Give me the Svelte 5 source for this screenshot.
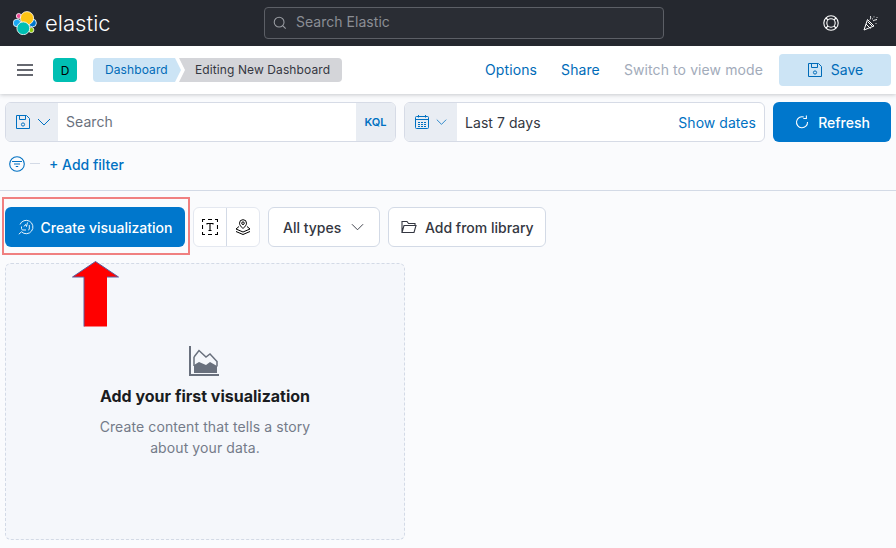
<script>
	const crumbs = ['Dashboard', 'Editing New Dashboard'];
</script>

{#snippet saveIcon()}
	<svg width="16" height="16" viewBox="0 0 16 16" fill="none" stroke="currentColor">
		<path d="M1.500 1.500h10l3 3v10h-13z M4.500 1.500v4h6v-4" />
		<circle cx="8" cy="10.500" r="1.600" />
	</svg>
{/snippet}

{#snippet chevron(w)}
	<svg width={w} height="10" viewBox="0 0 14 10" fill="none" stroke="currentColor">
		<path d="M1 2l6 6 6-6" />
	</svg>
{/snippet}

<div class="page">
	<header class="topbar">
		<div class="brand">
			<svg width="24" height="24" viewBox="0 0 24 24" stroke="#fff" stroke-width="0.8">
				<circle cx="5.800" cy="5" r="2.500" fill="#f04e98" />
				<circle cx="4" cy="12" r="3.800" fill="#1ba9f5" />
				<circle cx="19.500" cy="12" r="3.900" fill="#0077cc" />
				<circle cx="14" cy="7.200" r="6.600" fill="#fec514" />
				<circle cx="18.300" cy="19" r="2.600" fill="#93c90e" />
				<circle cx="10.300" cy="17.300" r="6.400" fill="#00bfb3" />
			</svg>
			<span class="wordmark">elastic</span>
		</div>
		<div class="global-search">
			<svg width="14" height="14" viewBox="0 0 16 16" fill="none" stroke="#9a9da3" stroke-width="1.200">
				<circle cx="7" cy="7" r="5.600" />
				<path d="M11 11l3.500 3.500" />
			</svg>
			<span>Search Elastic</span>
		</div>
		<div class="top-icons">
			<svg width="16" height="16" viewBox="0 0 16 16" fill="none" stroke="#fff" stroke-width="1.100">
				<circle cx="8" cy="8" r="7.200" />
				<circle cx="8" cy="8" r="4.200" />
				<path d="M3 3l2 2M13 3l-2 2M3 13l2-2M13 13l-2-2" />
			</svg>
			<svg width="16" height="16" viewBox="0 0 16 16" fill="none" stroke="#fff" stroke-width="1">
				<path d="M1 15L4.500 4.500 11 11z M3 9l4.500 4.500M4.500 6.500l5 5" />
				<path d="M7 4.500C8 3.500 7.500 2 7.500 1M10 6c1-1 2.500-1 4-1.500M11 1.500v.8M14 2v.8M13 8v.8M9.500 3.500v.8" />
			</svg>
		</div>
	</header>

	<nav class="appbar">
		<svg class="burger" width="16" height="12" viewBox="0 0 16 12">
			<path d="M0 1h16M0 6h16M0 11h16" stroke="#343741" stroke-width="1.600" />
		</svg>
		<div class="avatar">D</div>
		<div class="crumbs">
			<span class="crumb first">{crumbs[0]}</span>
			<span class="crumb last">{crumbs[1]}</span>
		</div>
		<div class="links">
			<span class="link">Options</span>
			<span class="link">Share</span>
			<span class="link muted">Switch to view mode</span>
			<button class="save">
				{@render saveIcon()}
				<span>Save</span>
			</button>
		</div>
	</nav>

	<section class="query">
		<div class="query-row">
			<div class="field search-field">
				<div class="prepend wide">
					{@render saveIcon()}
					{@render chevron(14)}
				</div>
				<span class="placeholder">Search</span>
				<div class="kql">KQL</div>
			</div>
			<div class="field date-field">
				<div class="prepend wide">
					<svg width="16" height="16" viewBox="0 0 16 16" fill="none" stroke="currentColor">
						<rect x="1.500" y="2.500" width="13" height="12" rx="1" />
						<path d="M1.500 5.500h13M4.500 1v2.500M11.500 1v2.500" />
						<path d="M4 8.500h8M4 10.500h8M4 12.500h8" stroke-dasharray="2 1" />
					</svg>
					{@render chevron(11)}
				</div>
				<span class="range">Last 7 days</span>
				<span class="show-dates">Show dates</span>
			</div>
			<button class="refresh">
				<svg width="14" height="14" viewBox="0 0 16 16" fill="none" stroke="#fff" stroke-width="1.200">
					<path d="M10 2.400A6.300 6.300 0 1 0 14.300 8M13 .5v3.500h-3.500" />
				</svg>
				Refresh
			</button>
		</div>
		<div class="filter-row">
			<svg width="16" height="16" viewBox="0 0 16 16" fill="none" stroke="#0071c2" stroke-width="1.100">
				<circle cx="8" cy="8" r="7.300" />
				<path d="M3 5.500h10M5 8h6M6.800 10.500h2.400" />
			</svg>
			<span class="dash"></span>
			<span class="add-filter">+ Add filter</span>
		</div>
	</section>

	<main class="content">
		<div class="toolbar">
			<button class="create">
				<svg width="16" height="16" viewBox="0 0 16 16" fill="none" stroke="#fff" stroke-width="0.900">
					<path d="M.8 15.200l2.700-2.400A6.700 6.700 0 1 0 2 5.500" />
					<path d="M3.500 7.500v2c0 1 .8 1.500 1.500 1.500h3M6 7.500l1.500-2 1 2 1-4M11.300 6v4c0 .5-.5 1-1 1" />
				</svg>
				Create visualization
			</button>
			<div class="icon-group">
				<span class="icon-btn">
					<svg width="16" height="16" viewBox="0 0 16 16" fill="none" stroke="#000" stroke-width="1.100">
						<path d="M.5 3V.5H3M6 .5h4M13 .5h2.500V3M15.500 6v4M15.500 13v2.500H13M10 15.500H6M3 15.500H.5V13M.5 10V6" />
						<path d="M5 5.500V4.500h6v1M8 4.500v7M6.500 11.500h3" />
					</svg>
				</span>
				<span class="icon-btn">
					<svg width="16" height="16" viewBox="0 0 16 16" fill="none" stroke="#000" stroke-width="1">
						<path d="M8 9.500C6 7.500 4.500 6.200 4.500 4.200a3.500 3.500 0 0 1 7 0C11.500 6.200 10 7.500 8 9.500z" />
						<circle cx="8" cy="4.200" r="1.300" />
						<path d="M4 7.500L1 10l7 3 7-3-3-2.500M1 12.500l7 3 7-3" />
					</svg>
				</span>
			</div>
			<button class="plain types">
				All types
				{@render chevron(13)}
			</button>
			<button class="plain library">
				<svg width="16" height="14" viewBox="0 0 16 14" fill="none" stroke="#343741" stroke-width="1.100">
					<path d="M1 12.500V1.500h5l1.500 2H14v2M1 12.500l2-7h12l-2 7z" />
				</svg>
				Add from library
			</button>
		</div>

		<div class="panel">
			<svg class="empty-icon" width="30" height="30" viewBox="0 0 30 30">
				<path d="M1 0v29h29" fill="none" stroke="#69707d" stroke-width="2" />
				<path d="M5 27V19l5-3 7 3 4-3 7 4v7z" fill="#69707d" />
				<path d="M5 11l5-6.500 7 6.500 4-3 7 7.500v5" fill="none" stroke="#69707d" stroke-width="1.500" />
				<path d="M5 11v9" fill="none" stroke="#69707d" stroke-width="1.500" />
			</svg>
			<h2>Add your first visualization</h2>
			<p>Create content that tells a story<br />about your data.</p>
		</div>

		<!-- annotation drawn on top of the screenshot -->
		<div class="callout"></div>
		<svg class="arrow" width="48" height="66" viewBox="0 0 48 66">
			<path d="M12 65.500V16H.5L23.500 .5 46.500 16H35V65.500z" fill="#f00" />
			<path d="M12 65.500V16H.5L23.500 .5 46.500 16H35" fill="none" stroke="#5a5f9e" stroke-width="1" />
		</svg>
	</main>
</div>

<style>
	:global(body) {
		margin: 0;
		background: #fafbfd;
	}

	.page {
		width: 896px;
		height: 548px;
		overflow: hidden;
		font-family: Inter, 'Liberation Sans', sans-serif;
		font-size: 14px;
		letter-spacing: 0.05px;
		color: #343741;
		background: #fafbfd;
	}

	button {
		font: inherit;
		cursor: pointer;
	}

	.topbar {
		height: 46px;
		background: #25282f;
		display: flex;
		align-items: center;
		padding: 0 16px 0 13px;
		box-sizing: border-box;
	}

	.brand {
		display: flex;
		align-items: center;
		gap: 8px;
		width: 251px;
	}

	.wordmark {
		color: #fff;
		font-size: 22px;
		font-weight: 300;
		padding-bottom: 1px;
	}

	.global-search {
		width: 400px;
		height: 32px;
		box-sizing: border-box;
		border: 1px solid #5c5f66;
		border-radius: 4px;
		background: #2a2d34;
		display: flex;
		align-items: center;
		gap: 9px;
		padding-left: 8px;
		color: #8b8e94;
	}

	.global-search span {
		padding-bottom: 3px;
		letter-spacing: 0.03px;
	}

	.top-icons {
		margin-left: auto;
		display: flex;
		gap: 24px;
		padding-right: 1px;
	}

	.appbar {
		height: 48px;
		background: #fff;
		display: flex;
		align-items: center;
		padding: 0 5px 0 17px;
		box-sizing: border-box;
		box-shadow: 0 1px 4px rgba(52, 55, 65, 0.25);
		position: relative;
	}

	.burger {
		margin-right: 20px;
	}

	.avatar {
		width: 24px;
		height: 24px;
		border-radius: 4px;
		background: #00bfb3;
		color: #000;
		font-size: 12px;
		display: flex;
		align-items: center;
		justify-content: center;
		margin-right: 16px;
	}

	.crumbs {
		display: flex;
		font-size: 12px;
		letter-spacing: 0.1px;
		height: 24px;
	}

	.crumb {
		display: flex;
		align-items: center;
		padding-bottom: 1px;
		box-sizing: border-box;
	}

	.first {
		background: #cce4f5;
		color: #006bb8;
		padding-left: 12px;
		padding-right: 12px;
		border-radius: 4px 0 0 4px;
		clip-path: polygon(0 0, calc(100% - 6px) 0, 100% 50%, calc(100% - 6px) 100%, 0 100%);
		width: 88px;
	}

	.last {
		background: #d4d5d9;
		padding-left: 16px;
		padding-right: 12px;
		margin-left: -2px;
		border-radius: 0 4px 4px 0;
		clip-path: polygon(0 0, 100% 0, 100% 100%, 0 100%, 6px 50%);
	}

	.links {
		margin-left: auto;
		display: flex;
		align-items: center;
		gap: 24px;
	}

	.link {
		color: #006bb8;
		padding-bottom: 2px;
		letter-spacing: 0.1px;
	}

	.muted {
		color: #a2abba;
		margin-right: -8px;
	}

	.save {
		width: 112px;
		height: 32px;
		border: 0;
		border-radius: 4px;
		background: #cce4f5;
		color: #006bb8;
		display: flex;
		align-items: center;
		justify-content: center;
		gap: 8px;
	}

	.save span {
		padding-bottom: 2px;
	}

	.query {
		padding: 8px 5px 0;
	}

	.query-row {
		display: flex;
		gap: 8px;
		height: 40px;
	}

	.field {
		display: flex;
		align-items: center;
		box-sizing: border-box;
		background: #fff;
		border: 1px solid #d6dbe6;
		border-radius: 6px;
		overflow: hidden;
	}

	.search-field {
		width: 391px;
	}

	.date-field {
		width: 361px;
	}

	.prepend {
		height: 100%;
		width: 52px;
		background: #e9edf3;
		color: #0071c2;
		display: flex;
		align-items: center;
		gap: 6px;
		padding-left: 9px;
		box-sizing: border-box;
	}

	.placeholder {
		margin-left: 8px;
		padding-bottom: 2px;
		color: #6a717d;
	}

	.kql {
		margin-left: auto;
		width: 39px;
		height: 100%;
		background: #e9edf3;
		color: #0071c2;
		font-size: 11px;
		font-weight: 600;
		display: flex;
		align-items: center;
		justify-content: center;
	}

	.range {
		margin-left: 8px;
	}

	.show-dates {
		margin-left: auto;
		margin-right: 8px;
		color: #0071c2;
	}

	.refresh {
		width: 118px;
		border: 0;
		border-radius: 6px;
		background: #0077cc;
		color: #fff;
		font-weight: 500;
		display: flex;
		align-items: center;
		justify-content: center;
		gap: 9px;
		padding-left: 7px;
	}

	.filter-row {
		height: 48px;
		display: flex;
		align-items: center;
		padding-left: 4px;
		box-sizing: border-box;
	}

	.filter-row svg {
		margin-top: -5px;
	}

	.dash {
		width: 10px;
		height: 1px;
		background: #d3dae6;
		margin: -5px 9px 0 5px;
	}

	.add-filter {
		color: #0071c2;
		font-weight: 500;
		margin-top: -3px;
		letter-spacing: 0;
	}

	.content {
		position: relative;
		border-top: 1px solid #d3dae6;
		padding: 16px 5px 0;
	}

	.toolbar {
		display: flex;
		height: 40px;
		gap: 8px;
	}

	.create {
		width: 180px;
		border: 0;
		border-radius: 6px;
		background: #0077cc;
		color: #fff;
		font-weight: 500;
		letter-spacing: 0;
		display: flex;
		align-items: center;
		justify-content: center;
		gap: 7px;
	}

	.icon-group {
		display: flex;
		background: #fff;
		border: 1px solid #e4e8f0;
		border-radius: 6px;
		box-sizing: border-box;
		width: 67px;
	}

	.icon-btn {
		flex: 1;
		display: flex;
		align-items: center;
		justify-content: center;
	}

	.icon-btn + .icon-btn {
		border-left: 1px solid #d3dae6;
	}

	.plain {
		background: #fff;
		border: 1px solid #d3dae6;
		border-radius: 6px;
		color: #343741;
		font-weight: 500;
		letter-spacing: 0;
		display: flex;
		align-items: center;
	}

	.types {
		width: 112px;
		gap: 10px;
		padding-left: 14px;
	}

	.library {
		width: 158px;
		gap: 8px;
		padding-left: 12px;
	}

	.panel {
		margin-top: 16px;
		width: 400px;
		height: 277px;
		box-sizing: border-box;
		border: 1px dashed #d3dae6;
		border-radius: 6px;
		background: #f5f7fb;
		display: flex;
		flex-direction: column;
		align-items: center;
		padding-top: 82px;
	}

	.empty-icon {
		margin-left: -2px;
	}

	.panel h2 {
		margin: 8px 0 0;
		font-size: 16px;
		line-height: 24px;
		font-weight: 700;
		letter-spacing: 0;
		color: #1a1c21;
	}

	.panel p {
		margin: 8px 0 0;
		line-height: 21px;
		text-align: center;
		letter-spacing: 0.1px;
		color: #747b89;
	}

	.callout {
		position: absolute;
		left: 2px;
		top: 6px;
		width: 188px;
		height: 58px;
		box-sizing: border-box;
		border: 2px solid #f08080;
	}

	.arrow {
		position: absolute;
		left: 72px;
		top: 70px;
	}
</style>
